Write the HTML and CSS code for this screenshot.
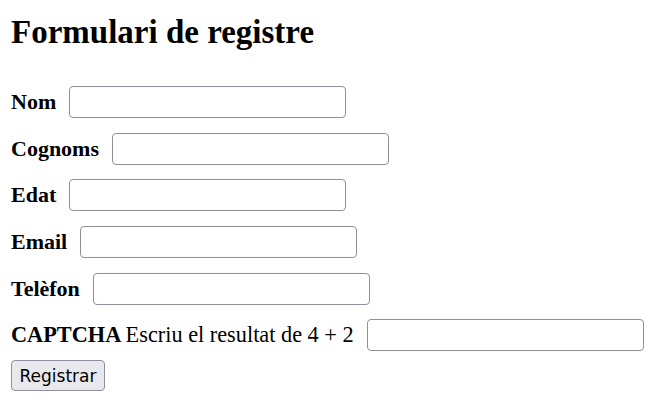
FILE: index.html
```html
<!DOCTYPE html>
<html lang="ca">
<head>
<meta charset="utf-8">
<title>Formulari de registre</title>
<link rel="stylesheet" href="styles.css">
</head>
<body>
<div class="page">
  <h1 class="title">Formulari de registre</h1>
  <form class="form">
    <div class="row"><label class="label" for="nom">Nom</label><input class="field" id="nom" type="text"></div>
    <div class="row"><label class="label" for="cognoms">Cognoms</label><input class="field" id="cognoms" type="text"></div>
    <div class="row"><label class="label" for="edat">Edat</label><input class="field" id="edat" type="text"></div>
    <div class="row"><label class="label" for="email">Email</label><input class="field" id="email" type="text"></div>
    <div class="row"><label class="label" for="tel">Telèfon</label><input class="field" id="tel" type="text"></div>
    <div class="row"><label class="label label-captcha" for="captcha"><strong>CAPTCHA</strong> <span class="plain">Escriu el resultat de 4 + 2</span></label><input class="field" id="captcha" type="text"></div>
    <div class="actions"><button class="btn" type="submit">Registrar</button></div>
  </form>
</div>
</body>
</html>
```
FILE: styles.css
```css
html, body {
  margin: 0;
  padding: 0;
  background: #fff;
}
.page {
  padding: 14px 11px 0 11px;
  font-family: "Liberation Serif", "Times New Roman", serif;
  color: #000;
}
.title {
  margin: 0 0 35px 0;
  font-size: 33px;
  line-height: 37px;
  font-weight: bold;
}
.form {
  display: flex;
  flex-direction: column;
  gap: 14.67px;
}
.row {
  display: flex;
  align-items: center;
  gap: 13px;
  height: 32px;
}
.label {
  font-size: 22px;
  font-weight: bold;
  line-height: 32px;
}
.label-captcha {
  font-size: 22.3px;
}
.label strong { font-weight: bold; }
.plain { font-weight: normal; }
.field {
  box-sizing: border-box;
  width: 277px;
  height: 32px;
  margin: 0;
  border: 1px solid #8f8f9d;
  border-radius: 4px;
  background: #fff;
  padding: 2px 6px;
  font-size: 16px;
}
.actions {
  margin-top: -5.67px;
  display: flex;
}
.btn {
  box-sizing: border-box;
  height: 31px;
  width: 94px;
  padding: 0;
  margin: 0;
  background: #e9e9ed;
  border: 1px solid #8f8f9d;
  border-radius: 4px;
  font-family: "DejaVu Sans", sans-serif;
  font-size: 17px;
  color: #000;
}
```
